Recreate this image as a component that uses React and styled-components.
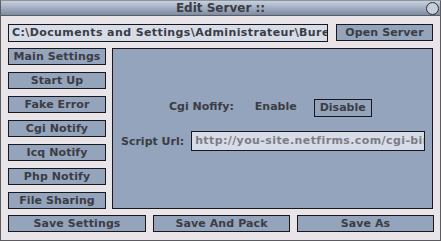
import styled, { createGlobalStyle } from "styled-components";

const GlobalStyle = createGlobalStyle`
  html, body {
    margin: 0;
    padding: 0;
    background: #e8e4e8;
  }
  * {
    box-sizing: border-box;
  }
`;

const Window = styled.div`
  width: 441px;
  height: 241px;
  border: 1px solid #5c5c60;
  border-top: none;
  background: #e8e4e8;
  font-family: "DejaVu Sans", Verdana, sans-serif;
  font-weight: bold;
  font-size: 11px;
  color: #3c3c44;
  display: flex;
  flex-direction: column;
`;

const TitleBar = styled.div`
  position: relative;
  height: 16px;
  margin: 0 -1px;
  border: 1px solid #5c5c60;
  border-top: 1px solid #8a94a4;
  background: linear-gradient(#c8d0dc, #7c8ca4);
  display: flex;
  align-items: center;
  justify-content: center;
  font-size: 12px;
  color: #3c3c44;
`;

const CloseDot = styled.span`
  position: absolute;
  right: 1px;
  top: 1px;
  width: 13px;
  height: 13px;
  border-radius: 50%;
  border: 1px solid #2c2c30;
  background: #c4d0d8;
`;

const Body = styled.div`
  flex: 1;
  padding: 8px 7px 7px;
  display: flex;
  flex-direction: column;
  gap: 6px;
`;

const TopRow = styled.div`
  display: flex;
  gap: 8px;
  height: 18px;
`;

const Field = styled.div`
  flex: none;
  width: ${(p) => p.$width}px;
  height: ${(p) => p.$height || 18}px;
  border: 1px solid #18181c;
  background: #d6dce8;
  color: ${(p) => (p.$muted ? "#7c7c84" : "#3c3c44")};
  padding: 0 0 0 3px;
  white-space: nowrap;
  overflow: hidden;
  line-height: ${(p) => (p.$height || 18) - 2}px;
  letter-spacing: 0.4px;
`;

const Button = styled.div`
  flex: none;
  height: 17px;
  width: ${(p) => (p.$width ? `${p.$width}px` : "auto")};
  border: 1px solid #18181c;
  background: #94a4bc;
  display: flex;
  align-items: center;
  justify-content: center;
  white-space: nowrap;
  letter-spacing: 0.1px;
`;

const Middle = styled.div`
  display: flex;
  gap: 6px;
  height: 161px;
`;

const SideColumn = styled.div`
  width: 98px;
  display: flex;
  flex-direction: column;
  gap: 7px;
`;

const Panel = styled.div`
  flex: 1;
  border: 1px solid #18181c;
  background: #94a4bc;
  padding-top: 48px;
  display: flex;
  flex-direction: column;
  gap: 14px;
`;

const PanelRow = styled.div`
  display: flex;
  align-items: center;
  padding-left: ${(p) => p.$indent}px;
  gap: ${(p) => p.$gap}px;
  white-space: nowrap;
`;

const Choice = styled.span`
  height: 18px;
  padding: 0 ${(p) => (p.$selected ? 5 : 3)}px;
  line-height: 16px;
  border: 1px solid ${(p) => (p.$selected ? "#18181c" : "transparent")};
  margin-top: ${(p) => (p.$selected ? 2 : 0)}px;
`;

const BottomRow = styled.div`
  display: grid;
  grid-template-columns: 138px 137px 137px;
  gap: 7px;
`;

const sideButtons = [
  "Main Settings",
  "Start Up",
  "Fake Error",
  "Cgi Notify",
  "Icq Notify",
  "Php Notify",
  "File Sharing",
];

export default function App() {
  return (
    <>
      <GlobalStyle />
      <Window>
        <TitleBar>
          Edit Server ::
          <CloseDot />
        </TitleBar>
        <Body>
          <TopRow>
            <Field $width={320}>
              C:\Documents and Settings\Administrateur\Bureau
            </Field>
            <Button $width={97}>Open Server</Button>
          </TopRow>
          <Middle>
            <SideColumn>
              {sideButtons.map((label) => (
                <Button key={label}>{label}</Button>
              ))}
            </SideColumn>
            <Panel>
              <PanelRow $indent={52} $gap={13}>
                <Choice>Cgi Nofify:</Choice>
                <Choice>Enable</Choice>
                <Choice $selected>Disable</Choice>
              </PanelRow>
              <PanelRow $indent={8} $gap={7}>
                <span>Script Url:</span>
                <Field $width={234} $height={20} $muted>
                  http://you-site.netfirms.com/cgi-bin
                </Field>
              </PanelRow>
            </Panel>
          </Middle>
          <BottomRow>
            <Button>Save Settings</Button>
            <Button>Save And Pack</Button>
            <Button>Save As</Button>
          </BottomRow>
        </Body>
      </Window>
    </>
  );
}
